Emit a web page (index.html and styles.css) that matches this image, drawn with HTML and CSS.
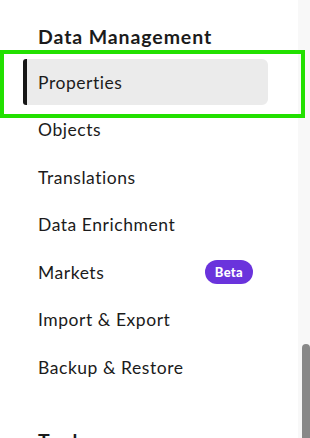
FILE: index.html
```html
<!DOCTYPE html>
<html lang="en">
<head>
  <meta charset="UTF-8" />
  <title>Sidebar - Data Management</title>
  <link rel="stylesheet" href="styles.css">
</head>
<body>
  <div class="layout">
    <nav class="sidebar">
      <div class="section">
        <h2 class="section-title">Data Management</h2>
        <ul class="nav-list">
          <li class="nav-item active">Properties</li>
          <li class="nav-item">Objects</li>
          <li class="nav-item">Translations</li>
          <li class="nav-item">Data Enrichment</li>
          <li class="nav-item">Markets <span class="badge">Beta</span></li>
          <li class="nav-item">Import &amp; Export</li>
          <li class="nav-item">Backup &amp; Restore</li>
        </ul>
      </div>
      <div class="section">
        <h2 class="section-title">Tools</h2>
      </div>
    </nav>

    <div class="scroll-track">
      <div class="scroll-thumb"></div>
    </div>

    <!-- highlight frame -->
    <div class="highlight"></div>
  </div>
</body>
</html>
```

FILE: styles.css
```css
body {
  margin: 0;
  padding: 0;
  background: #ffffff;
  font-family: Lato, "Noto Sans", sans-serif;
  color: #1b1b1b;
  overflow: hidden;
}

.layout {
  position: relative;
  display: flex;
  height: 438px;
  overflow: hidden;
}

.sidebar {
  flex: 1;
  padding: 25px 30px 0 23px;
}

.section {
  margin-bottom: 38px;
}

.section-title {
  margin: 0 0 10px 15px;
  font-size: 19.5px;
  line-height: 24px;
  font-weight: 700;
  letter-spacing: 0.9px;
}

.nav-list {
  list-style: none;
  margin: 0;
  padding: 0;
  display: flex;
  flex-direction: column;
  gap: 1.6px;
}

.nav-item {
  display: flex;
  align-items: center;
  justify-content: space-between;
  height: 46px;
  padding: 0 15px;
  font-size: 17.5px;
  letter-spacing: 0.55px;
  border-radius: 6px;
}

.nav-item.active {
  background: #ebebeb;
  border-left: 4px solid #161616;
  padding-left: 11px;
  border-radius: 3px 6px 6px 3px;
}

.badge {
  background: #6a33dc;
  color: #ffffff;
  font-size: 13px;
  font-weight: 900;
  letter-spacing: 0.3px;
  height: 24px;
  line-height: 24px;
  padding: 0 10px;
  border-radius: 12px;
}

.scroll-track {
  width: 12px;
  background: #f8f8f8;
  display: flex;
  justify-content: flex-end;
}

.scroll-thumb {
  width: 8px;
  margin-top: 344px;
  height: 120px;
  background: #888888;
  border-radius: 4px 4px 0 0;
}

.highlight {
  position: absolute;
  left: 0;
  top: 50px;
  width: 297px;
  height: 60px;
  border: 4px solid #22e000;
}
```
